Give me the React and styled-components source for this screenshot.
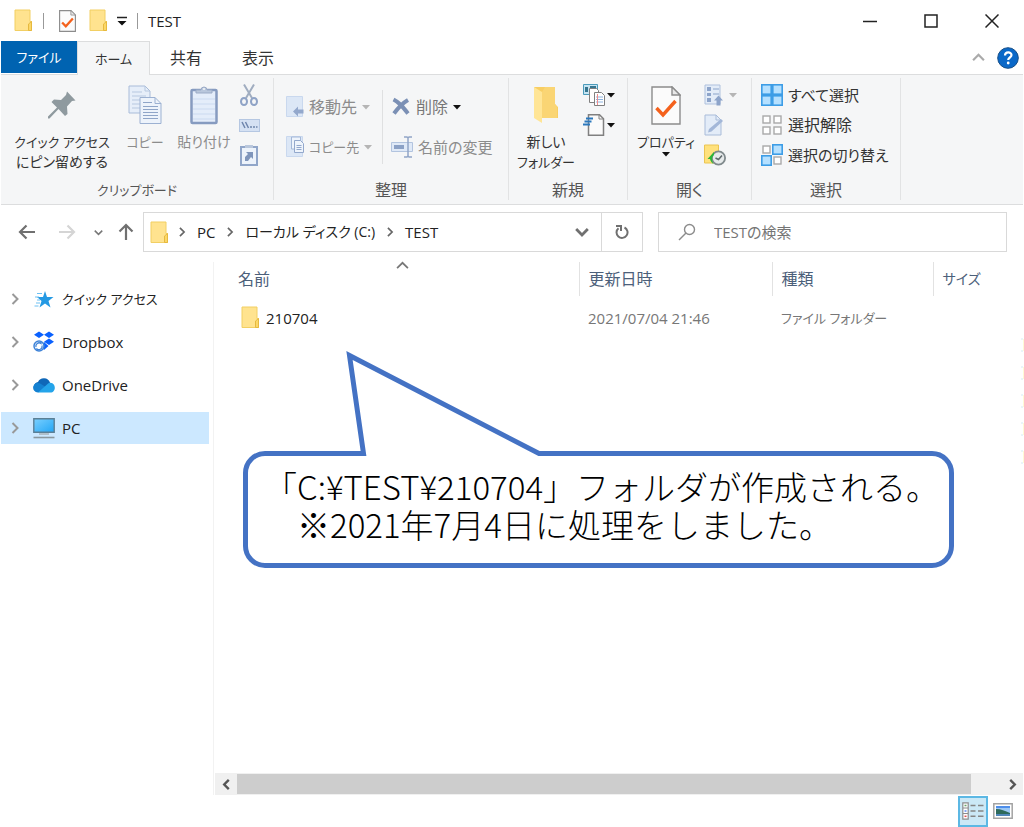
import React from 'react';
import styled, { createGlobalStyle } from 'styled-components';

const GlobalStyle = createGlobalStyle`
    * {
        box-sizing: border-box;
    }
    body {
        margin: 0;
        background-color: #fff;
        color: #333;
        font-family: "Open Sans", "Noto Sans CJK JP", sans-serif;
        font-size: 15px;
        line-height: 20px;
        font-feature-settings: "palt";
    }
    button, input {
        font: inherit;
        font-feature-settings: inherit;
        color: inherit;
        margin: 0;
        padding: 0;
        border: 0;
        background: none;
    }
    a {
        color: inherit;
        text-decoration: none;
    }
    svg {
        display: block;
        flex: none;
    }
`;

const sizes = { kana: '13px', label: '14px', mixed: '15px', kanji: '16px' };

const Window = styled.div`
    display: flex;
    flex-direction: column;
    min-height: 100vh;
    padding: 0 1px;
`;

const Text = styled.span`
    font-size: ${props => sizes[props.$size] || '15px'};
    white-space: nowrap;
`;

/* title bar */

const TitleBar = styled.header`
    display: flex;
    align-items: center;
    height: 41px;
    padding: 0 1px 0 8px;
    color: #222;
`;

const IconButton = styled.button`
    display: flex;
    align-items: center;
    justify-content: center;
    flex: none;
    width: ${props => props.$w || 30}px;
    height: ${props => props.$h || 30}px;
`;

const TitleDivider = styled.span`
    width: 1px;
    height: 16px;
    margin: 0 5px;
    background-color: #999;
`;

const WindowTitle = styled.h1`
    flex: 1;
    margin: 0 0 0 5px;
    font-size: 15px;
    font-weight: 400;
`;

/* tabs */

const TabBar = styled.nav`
    display: flex;
    height: 33px;
`;

const Tab = styled.button`
    width: ${props => props.$w || 72}px;
    font-size: ${props => sizes[props.$size] || '15px'};
    ${props => props.$file && `
        height: 32px;
        background-color: #0063b1;
        color: #fff;
    `}
    ${props => props.$active && `
        height: 34px;
        background-color: #f5f6f7;
        border: 1px solid #dcddde;
        border-bottom: 0;
        position: relative;
    `}
`;

const TabTools = styled.div`
    display: flex;
    align-items: center;
    margin-left: auto;
`;

/* ribbon */

const RibbonBar = styled.section`
    display: flex;
    height: 131px;
    padding: 3px 0 4px;
    background-color: #f5f6f7;
    border-top: 1px solid #dcddde;
    border-bottom: 1px solid #dcddde;
`;

const Group = styled.div`
    display: flex;
    flex-direction: column;
    flex: none;
    width: ${props => props.$w}px;
    border-right: 1px solid #e2e3e4;
`;

const GroupBody = styled.div`
    display: flex;
    flex: 1;
    padding-left: 7px;
`;

const GroupLabel = styled.div`
    text-align: center;
    color: #555;
    font-size: ${props => sizes[props.$size]};
`;

const BigButton = styled.button`
    display: flex;
    flex-direction: column;
    align-items: center;
    width: ${props => props.$w}px;
    font-size: ${props => sizes[props.$size] || '13px'};
    white-space: nowrap;
    &:disabled {
        color: #8c8c8c;
    }
`;

const BigIcon = styled.span`
    display: flex;
    align-items: center;
    height: 54px;
`;

const ButtonColumn = styled.div`
    display: flex;
    flex-direction: column;
    width: ${props => props.$w}px;
    padding-top: ${props => (props.$wide ? 9 : 2)}px;
    padding-left: ${props => props.$indent || 0}px;
`;

const SmallButton = styled.button`
    display: flex;
    align-items: center;
    gap: 5px;
    height: ${props => (props.$tall ? 40 : 30)}px;
    font-size: ${props => sizes[props.$size] || '15px'};
    white-space: nowrap;
    color: ${props => (props.$muted ? '#777' : 'inherit')};
    &:disabled {
        color: #8c8c8c;
    }
`;

const ColumnDivider = styled.span`
    width: 1px;
    height: 74px;
    margin: 12px 8px 0 0;
    background-color: #dfe0e1;
`;

/* address row */

const AddressRow = styled.div`
    display: flex;
    align-items: center;
    height: 57px;
    padding: 0 16px 3px 6px;
`;

const AddressBox = styled.div`
    display: flex;
    align-items: center;
    flex: 3 1 0;
    height: 40px;
    border: 1px solid #d9d9d9;
    padding-left: 6px;
    margin-right: 15px;
    color: #222;
`;

const Crumbs = styled.nav`
    display: flex;
    align-items: center;
    flex: 1;
    margin-left: 8px;
`;

const Crumb = styled.a`
    margin: 0 10px;
    white-space: nowrap;
    font-size: ${props => sizes[props.$size] || '15px'};
`;

const RefreshCell = styled.div`
    display: flex;
    align-items: center;
    align-self: stretch;
    border-left: 1px solid #d9d9d9;
`;

const SearchBox = styled.label`
    display: flex;
    align-items: center;
    flex: 2 1 0;
    height: 40px;
    padding-left: 19px;
    gap: 18px;
    border: 1px solid #d9d9d9;
`;

const SearchInput = styled.input`
    flex: 1;
    min-width: 0;
    outline: 0;
    &::placeholder {
        color: #757575;
        opacity: 1;
    }
`;

/* folder tree and file list */

const Content = styled.div`
    display: flex;
    flex: 1;
`;

const Sidebar = styled.nav`
    display: flex;
    flex-direction: column;
    gap: 11px;
    flex: none;
    width: 213px;
    padding: 21px 4px 0 0;
    border-right: 1px solid #f2f2f2;
`;

const TreeItem = styled.a`
    display: flex;
    align-items: center;
    height: 32px;
    padding-left: 8px;
    color: #222;
    background-color: ${props => (props.$selected ? '#cce8ff' : 'transparent')};
`;

const TreeIcon = styled.span`
    display: flex;
    justify-content: center;
    width: 24px;
    margin: 0 6px 0 11px;
`;

const Main = styled.main`
    position: relative;
    display: flex;
    flex-direction: column;
    flex: 1;
    min-width: 0;
`;

const FileTable = styled.table`
    width: 100%;
    table-layout: fixed;
    border-collapse: collapse;
    margin-bottom: auto;
`;

const HeadCell = styled.th`
    position: relative;
    width: ${props => (props.$w ? `${props.$w}px` : 'auto')};
    height: 34px;
    padding: 0 0 0 ${props => (props.$first ? 24 : 9)}px;
    border-right: ${props => (props.$last ? '0' : '1px solid #e2e2e2')};
    text-align: left;
    font-weight: 400;
    font-size: ${props => sizes[props.$size] || '16px'};
    color: #4c607a;
`;

const SortMark = styled.span`
    position: absolute;
    top: -3px;
    left: 50%;
`;

const Cell = styled.td`
    height: 43px;
    padding: 0 0 0 ${props => (props.$first ? 27 : 9)}px;
    font-size: ${props => sizes[props.$size] || '15px'};
    color: #777;
    white-space: nowrap;
`;

const FileName = styled.a`
    display: flex;
    align-items: center;
    gap: 6px;
    color: #222;
`;

const Callout = styled.aside`
    position: absolute;
    top: 189px;
    left: 29px;
    width: 711px;
    padding: 11px 16px 20px;
    border: 5px solid #4472c4;
    border-radius: 22px;
    background-color: #fff;
    color: #000;
    font-family: "Noto Sans CJK JP", sans-serif;
    font-feature-settings: normal;
    font-size: 33px;
    font-weight: 300;
    line-height: 38px;
    white-space: pre;
`;

const Tail = styled.svg`
    position: absolute;
    top: -105px;
    left: 96px;
`;

const EdgeMarks = styled.svg`
    position: absolute;
    top: 76px;
    right: -1px;
`;

const ScrollBar = styled.div`
    display: flex;
    align-items: center;
    height: 22px;
    margin-left: 1px;
    background-color: #f0f0f0;
`;

const ScrollTrack = styled.div`
    flex: 1;
    height: 20px;
    padding-right: 30px;
`;

const ScrollThumb = styled.div`
    height: 100%;
    background-color: #cdcdcd;
`;

const StatusBar = styled.footer`
    display: flex;
    align-items: center;
    justify-content: flex-end;
    height: 32px;
    padding-right: 5px;
`;

const ViewButton = styled(IconButton)`
    border: ${props => (props.$on ? '2px solid #5cb8e4' : '0')};
    background-color: ${props => (props.$on ? '#cbe8f6' : 'transparent')};
`;

/* icons */

const FolderIcon = () => (
    <svg width="19" height="23" viewBox="0 0 19 23">
        <path d="M1 1h15v11.5h1.5V21.5H1z" fill="#ffe38f" stroke="#f2cf63" />
        <path d="M14.5 21.5v-6.5l3-2.5v9z" fill="#fbd768" stroke="#e6b93f" />
    </svg>
);

const CheckPage = ({ w = 17, h = 22 }) => (
    <svg width={w} height={h} viewBox="0 0 30 39">
        <path d="M1 1h20l8 8v29H1z" fill="#fbfbfb" stroke="#8c8c8c" strokeWidth={w > 20 ? 1.4 : 2} />
        <path d="M21 1v8h8z" fill="#e8e8e8" stroke="#8c8c8c" strokeWidth="1.4" />
        <path d="M5.500 22l6.500 7L24.500 15" fill="none" stroke="#f4611c" strokeWidth={w > 20 ? 3.4 : 4} />
    </svg>
);

const Caret = ({ color = '#111' }) => (
    <svg width="8" height="5" viewBox="0 0 8 5">
        <path d="M0 0h8L4 4.500z" fill={color} />
    </svg>
);

const Chevron = ({ dir = 'right', w = 10, color = '#666', stroke = 2 }) => {
    const turn = { right: 0, down: 90, left: 180, up: 270 }[dir];
    return (
        <svg width={w} height={w} viewBox="0 0 12 12">
            <path d="M3.500 1l5 5-5 5" transform={`rotate(${turn} 6 6)`} fill="none" stroke={color} strokeWidth={stroke} />
        </svg>
    );
};

const Arrow = ({ turn = 0, color = '#707070' }) => (
    <svg width="18" height="18" viewBox="0 0 18 18">
        <path d="M17 9H2M8.500 2.500L2 9l6.500 6.500" transform={`rotate(${turn} 9 9)`} fill="none" stroke={color} strokeWidth="2.200" />
    </svg>
);

const QatMenuIcon = () => (
    <svg width="10" height="10" viewBox="0 0 10 10">
        <path d="M0 1.500h10" stroke="#222" strokeWidth="1.500" />
        <path d="M0.500 5h9L5 9.500z" fill="#111" />
    </svg>
);

const PinIcon = () => (
    <svg width="28" height="28" viewBox="0 0 28 28">
        <path d="M19 0.500l8.500 9-3.500 0.500-5 5.500 0.500 7.500-2.500 2-6.500-7L1.500 27.500 0 27.500v-2L9 16.500 3.500 11l2.500-2.500 7 0.500L18 4z" fill="#8f9a9f" />
    </svg>
);

const CopyIcon = () => (
    <svg width="34" height="40" viewBox="0 0 34 40">
        <path d="M1 1h16l5 5v22H1z" fill="#e6eef9" stroke="#a9bcd9" />
        <path d="M17 1v5h5M4 7h10M4 11h14M4 15h8M4 19h8M4 23h8" fill="none" stroke="#b7c8e0" />
        <path d="M12 12.500h15l6 6V38.500H12z" fill="#edf3fb" stroke="#9cb1d2" />
        <path d="M27 12.500v6h6" fill="none" stroke="#9cb1d2" />
        <path d="M15 17.500h9M15 21.500h15M15 24.500h15M15 27.500h15M15 30.500h15M15 33.500h15" stroke="#8fa5c8" />
    </svg>
);

const PasteIcon = () => (
    <svg width="28" height="40" viewBox="0 0 28 40">
        <rect x="1.500" y="5" width="25" height="33" rx="1" fill="#e4edfa" stroke="#869bc0" strokeWidth="2.500" />
        <path d="M3 14h22M3 19h22M3 24h22M3 29h22M3 34h22" stroke="#cbdaf0" />
        <path d="M6 8V5h5a3 3 0 0 1 6 0h5v3z" fill="#b9c7dc" stroke="#9babc6" />
        <circle cx="14" cy="4" r="1" fill="#f5f6f7" />
    </svg>
);

const CutIcon = () => (
    <svg width="18" height="22" viewBox="0 0 18 22" fill="none" stroke="#a0adc0">
        <path d="M4 0.500L12 14M14 0.500L6 14" strokeWidth="2" />
        <ellipse cx="4" cy="17.500" rx="3" ry="3.500" stroke="#8fa3c6" strokeWidth="2" />
        <ellipse cx="14" cy="17.500" rx="3" ry="3.500" stroke="#8fa3c6" strokeWidth="2" />
    </svg>
);

const CopyPathIcon = () => (
    <svg width="21" height="13" viewBox="0 0 21 13">
        <rect x="0.500" y="0.500" width="20" height="12" fill="#d5e1f3" stroke="#b5c7e2" />
        <path d="M3 3l3 6M6.500 3l3 6" stroke="#6f86ad" strokeWidth="1.500" />
        <path d="M11 8h2M14 8h2M17 8h1.500" stroke="#6f86ad" strokeWidth="1.500" />
    </svg>
);

const ShortcutIcon = () => (
    <svg width="18" height="22" viewBox="0 0 18 22">
        <rect x="1" y="3" width="16" height="18" fill="#edf3fb" stroke="#91a6c9" strokeWidth="2" />
        <path d="M5 1h8v3H5z" fill="#b9c7dc" />
        <path d="M5 17v-4l3-3-2-2h7v7l-2-2-3 4z" fill="#7f95bb" />
    </svg>
);

const MoveToIcon = () => (
    <svg width="18" height="22" viewBox="0 0 18 22">
        <path d="M0.500 0.500h16v20h-16z" fill="#dce7f6" stroke="#c9d8ee" />
        <path d="M7 15.500l5-5v3h5.500v4H12v3z" fill="#93a8cc" />
    </svg>
);

const CopyToIcon = () => (
    <svg width="18" height="22" viewBox="0 0 18 22">
        <path d="M0.500 0.500h16v20h-16z" fill="#dce7f6" stroke="#c9d8ee" />
        <path d="M5.500 1h9v12h-9z" fill="#eef4fc" stroke="#a4b8d8" />
        <path d="M8.500 4.500h6l3 3v9h-9z" fill="#eef4fc" stroke="#93a8cc" />
        <path d="M10.500 9.500h5M10.500 11.500h5M10.500 13.500h5" stroke="#93a8cc" />
    </svg>
);

const DeleteIcon = () => (
    <svg width="20" height="20" viewBox="0 0 20 20">
        <path d="M2.500 2.500c6 3 9 7 14.500 14M17 3C10 7 7 11 3 16.500" fill="none" stroke="#7b90b5" strokeWidth="4" />
    </svg>
);

const RenameIcon = () => (
    <svg width="22" height="22" viewBox="0 0 22 22">
        <path d="M0.500 6.500h21v9h-21z" fill="#dfe9f7" stroke="#b2c4df" />
        <path d="M3 9h10v4H3z" fill="#8ba1c6" />
        <path d="M13 1h3l1 1 1-1h3M13 21h3l1-1 1 1h3M17 2v18" fill="none" stroke="#91a5c7" strokeWidth="1.500" />
    </svg>
);

const NewFolderIcon = () => (
    <svg width="26" height="38" viewBox="0 0 26 38">
        <path d="M1 1h21v17l3 3v11H9z" fill="#f8ce63" />
        <path d="M1 1l8 5v31L1 32z" fill="#ffe596" />
        <path d="M9 6l3-5h10v17l2 3v11H9z" fill="#fad574" />
    </svg>
);

const NewItemIcon = () => (
    <svg width="22" height="22" viewBox="0 0 22 22">
        <path d="M0.500 0.500h14v10h-14z" fill="#c6e4f2" stroke="#4b9bbb" />
        <path d="M2 3h3v5H2zM7 2h6v3H7z" fill="#35758f" />
        <path d="M6.500 4.500h7l2 2v12h-9z" fill="#fff" stroke="#808080" />
        <path d="M11.500 8.500h7l3 3v10h-10z" fill="#fff" stroke="#808080" />
        <path d="M13 13h7M13 15.500h7M13 18h7" stroke="#8db4e0" />
        <path d="M14.500 10v11" stroke="#ef8d8d" />
    </svg>
);

const EasyAccessIcon = () => (
    <svg width="22" height="22" viewBox="0 0 22 22">
        <path d="M5.500 0.800h11l4 4v16.400h-15z" fill="#fafafa" stroke="#808080" strokeWidth="1.500" />
        <path d="M16 1v4h4" fill="none" stroke="#808080" />
        <path d="M3 4.500h7M1.500 7.500h7M0 10.500h7" stroke="#2b78bd" strokeWidth="2" />
    </svg>
);

const OpenIcon = () => (
    <svg width="20" height="22" viewBox="0 0 20 22">
        <path d="M1 1h15v19H1z" fill="#e3ecf8" stroke="#afc1dd" />
        <path d="M3 3h4v4H3zM3 9h4v3H3zM3 14h4v4H3z" fill="#8da4ca" />
        <path d="M9 5h6M9 10h6" stroke="#a9bcd9" strokeWidth="1.500" />
        <path d="M12.500 21.500v-5H10l4.500-5 4.500 5h-2.500v5z" fill="#8da4ca" />
    </svg>
);

const EditIcon = () => (
    <svg width="20" height="22" viewBox="0 0 20 22">
        <path d="M1 1h11l5 5v15H1z" fill="#e3ecf8" stroke="#a9bcd9" />
        <path d="M12 1v5h5" fill="none" stroke="#a9bcd9" />
        <path d="M4 18.500l1-3.500L17 5l2 2L7.500 17.500z" fill="#a3b7d8" />
    </svg>
);

const HistoryIcon = () => (
    <svg width="22" height="22" viewBox="0 0 22 22">
        <path d="M0.500 1h14v18h-14z" fill="#ffe17c" stroke="#ebc553" />
        <circle cx="14.500" cy="14" r="6.600" fill="#e6eaeb" stroke="#808a8d" strokeWidth="1.800" />
        <path d="M11.500 14l3 1.500 3.500-4" fill="none" stroke="#606a6d" strokeWidth="1.500" />
        <path d="M3.500 15l6.500-7v3c-2.500 2-2.500 5-0.500 9-1.500-1-3-2.500-3.500-5z" fill="#2db53a" />
    </svg>
);

const gridCells = [[0, 0], [11, 0], [0, 11], [11, 11]];

const SelectIcon = ({ on }) => (
    <svg width="22" height="22" viewBox="0 0 22 22">
        {gridCells.map(([x, y], i) => on.includes(i)
            ? <rect key={i} x={x + 0.8} y={y + 0.8} width="9.400" height="9.400" fill="#b5e0ff" stroke="#3d9de6" strokeWidth="1.600" />
            : <rect key={i} x={x + 2} y={y + 2} width="7" height="7" fill="#fff" stroke="#a9a9a9" strokeWidth="1.400" />)}
    </svg>
);

const MinimizeIcon = () => (
    <svg width="14" height="14" viewBox="0 0 14 14"><path d="M0 7.500h14" stroke="#222" strokeWidth="1.500" /></svg>
);

const MaximizeIcon = () => (
    <svg width="14" height="14" viewBox="0 0 14 14"><path d="M1 1h12v12H1z" fill="none" stroke="#222" strokeWidth="1.500" /></svg>
);

const CloseIcon = () => (
    <svg width="14" height="14" viewBox="0 0 14 14"><path d="M0.500 0.500l13 13M13.500 0.500l-13 13" stroke="#222" strokeWidth="1.500" /></svg>
);

const HelpIcon = () => (
    <svg width="22" height="22" viewBox="0 0 22 22">
        <circle cx="11" cy="11" r="10.300" fill="#0a68c8" stroke="#174f88" />
        <path d="M8 8.500c0-4 6.500-4 6.500-0.500 0 2.500-3.300 2.500-3.300 5" fill="none" stroke="#fff" strokeWidth="2.200" />
        <circle cx="11.200" cy="16" r="1.400" fill="#fff" />
    </svg>
);

const RefreshIcon = () => (
    <svg width="14" height="16" viewBox="0 0 14 16">
        <path d="M9.500 3.500A5.500 5.500 0 1 1 3.500 4.200" fill="none" stroke="#707070" strokeWidth="2" />
        <path d="M1 2h5v5" fill="none" stroke="#707070" strokeWidth="2" />
    </svg>
);

const SearchIcon = () => (
    <svg width="18" height="18" viewBox="0 0 18 18">
        <circle cx="11.500" cy="6.500" r="5" fill="none" stroke="#8c8c8c" strokeWidth="1.400" />
        <path d="M8 10L1 17" stroke="#8c8c8c" strokeWidth="1.400" />
    </svg>
);

const StarIcon = () => (
    <svg width="20" height="17" viewBox="0 0 20 17">
        <path d="M11 0l2 6h6.500l-5 4 2 6.500-5.500-4-5.500 4L7.500 10 3 6h6z" fill="#2499e3" />
        <path d="M3 2.500h5M1 6h4M3 9h3M2 12h4M0.500 15h4" stroke="#6cc0f2" />
    </svg>
);

const DropboxIcon = () => (
    <svg width="22" height="22" viewBox="0 0 22 22">
        <path d="M6 0.500l5 3.200L6 7 1 3.800zM16 0.500l5 3.200L16 7l-5-3.200zM16 7.500l5 3.200-5 3.300-5-3.200zM11 11l4.500 4-4.500 4-2-3z" fill="#0a61fe" />
        <circle cx="6" cy="15" r="5" fill="#fff" stroke="#3e83d8" strokeWidth="1.500" />
        <path d="M3 16a3.200 3.200 0 0 1 5-3.500V11M9 14.500a3.200 3.200 0 0 1-5 3.500v1.500" fill="none" stroke="#3e83d8" strokeWidth="1.300" />
    </svg>
);

const OneDriveIcon = () => (
    <svg width="22" height="15" viewBox="0 0 22 15">
        <path d="M3 13a5 5 0 0 1 2-9A6.500 6.500 0 0 1 17 4.500L14 12z" fill="#0f67b8" />
        <path d="M5 14.500A4.800 4.800 0 1 1 8 6l8 5z" fill="#1481d1" />
        <path d="M5 14.500L14 6.500a4 4 0 0 1 3.500-1.700c6 0.500 5.500 9.700 0 9.700z" fill="#24a4ea" />
    </svg>
);

const PcIcon = () => (
    <svg width="22" height="21" viewBox="0 0 22 21">
        <defs>
            <linearGradient id="screen" x1="0" y1="0" x2="1" y2="1">
                <stop offset="0" stopColor="#7ad0ff" />
                <stop offset="1" stopColor="#22a5f5" />
            </linearGradient>
        </defs>
        <path d="M0.800 0.800h20.400v13.400H0.800z" fill="url(#screen)" stroke="#5b7f95" strokeWidth="1.400" />
        <path d="M6 16h10" stroke="#a7b3ba" strokeWidth="1.500" />
        <path d="M0.500 19.500h21" stroke="#8a979e" strokeWidth="1.600" />
    </svg>
);

const DetailsIcon = () => (
    <svg width="22" height="18" viewBox="0 0 22 18">
        <path d="M0.800 0.800h5.400v16.400H0.800zM1 6h5M1 11.500h5" fill="#fff" stroke="#8c8c8c" strokeWidth="1.200" />
        <path d="M2.500 3.500h2" stroke="#6aa56a" strokeWidth="1.500" />
        <path d="M2.500 9h2" stroke="#5b8bf0" strokeWidth="1.500" />
        <path d="M2.500 14.300h2" stroke="#e05050" strokeWidth="1.500" />
        <path d="M8.500 3.500h5M16 3.500h5.500M8.500 9h5M16 9h5.500M8.500 14.300h5M16 14.300h5.500" stroke="#858585" strokeWidth="1.400" />
    </svg>
);

const ThumbnailIcon = () => (
    <svg width="20" height="16" viewBox="0 0 20 16">
        <path d="M0.800 0.800h18.400v14.400H0.800z" fill="#fff" stroke="#a3a3a3" strokeWidth="1.500" />
        <path d="M3 3h14v10H3z" fill="#9cc8f5" />
        <path d="M3 3h14v2H3z" fill="#4e8eea" />
        <path d="M3 6c5 0 9 2 14 4v1H3z" fill="#2d6a5b" />
        <path d="M3 11h14v2H3z" fill="#4f86b8" />
    </svg>
);

const treeItems = [
    { name: 'クイック アクセス', icon: <StarIcon />, size: 'kana' },
    { name: 'Dropbox', icon: <DropboxIcon /> },
    { name: 'OneDrive', icon: <OneDriveIcon /> },
    { name: 'PC', icon: <PcIcon />, selected: true },
];

const SplitWrap = styled(SmallButton)`
    padding-left: 7px;
    gap: ${props => (props.$wide ? 5 : 2)}px;
`;

function SplitButton({ label, wide, single, disabled, children }) {
    return (
        <SplitWrap aria-label={label} $wide={wide} disabled={disabled}>
            {children}
            {!single && <Caret color={disabled ? '#b5b5b5' : '#111'} />}
        </SplitWrap>
    );
}

function Ribbon() {
    return (
        <RibbonBar>
            <Group $w={273}>
                <GroupBody>
                    <BigButton $w={108}>
                        <BigIcon><PinIcon /></BigIcon>
                        <Text $size="kana">クイック アクセス</Text>
                        <Text $size="label">にピン留めする</Text>
                    </BigButton>
                    <BigButton $w={58} disabled>
                        <BigIcon><CopyIcon /></BigIcon>
                        コピー
                    </BigButton>
                    <BigButton $w={60} $size="label" disabled>
                        <BigIcon><PasteIcon /></BigIcon>
                        貼り付け
                    </BigButton>
                    <ButtonColumn $w={30}>
                        <IconButton aria-label="切り取り"><CutIcon /></IconButton>
                        <IconButton aria-label="パスのコピー"><CopyPathIcon /></IconButton>
                        <IconButton aria-label="ショートカットの貼り付け"><ShortcutIcon /></IconButton>
                    </ButtonColumn>
                </GroupBody>
                <GroupLabel $size="kana">クリップボード</GroupLabel>
            </Group>
            <Group $w={235}>
                <GroupBody>
                    <ButtonColumn $wide $indent={5} $w={101}>
                        <SmallButton $tall $size="kanji" disabled><MoveToIcon />移動先<Caret color="#b5b5b5" /></SmallButton>
                        <SmallButton $tall $size="kana" disabled><CopyToIcon />コピー先<Caret color="#b5b5b5" /></SmallButton>
                    </ButtonColumn>
                    <ColumnDivider />
                    <ButtonColumn $wide $w={110}>
                        <SmallButton $tall $size="kanji" $muted><DeleteIcon />削除<Caret /></SmallButton>
                        <SmallButton $tall $size="mixed" disabled><RenameIcon />名前の変更</SmallButton>
                    </ButtonColumn>
                </GroupBody>
                <GroupLabel $size="kanji">整理</GroupLabel>
            </Group>
            <Group $w={119}>
                <GroupBody>
                    <BigButton $w={60}>
                        <BigIcon><NewFolderIcon /></BigIcon>
                        <Text $size="label">新しい</Text>
                        <Text $size="kana">フォルダー</Text>
                    </BigButton>
                    <ButtonColumn $w={46}>
                        <SplitButton label="新しいアイテム"><NewItemIcon /></SplitButton>
                        <SplitButton label="ショートカット"><EasyAccessIcon /></SplitButton>
                    </ButtonColumn>
                </GroupBody>
                <GroupLabel $size="kanji">新規</GroupLabel>
            </Group>
            <Group $w={124}>
                <GroupBody>
                    <BigButton $w={62}>
                        <BigIcon><CheckPage w={30} h={39} /></BigIcon>
                        プロパティ
                        <Caret />
                    </BigButton>
                    <ButtonColumn $w={48}>
                        <SplitButton label="開く" wide disabled><OpenIcon /></SplitButton>
                        <SplitButton label="編集" single disabled><EditIcon /></SplitButton>
                        <SplitButton label="履歴" single><HistoryIcon /></SplitButton>
                    </ButtonColumn>
                </GroupBody>
                <GroupLabel $size="kanji">開く</GroupLabel>
            </Group>
            <Group $w={149}>
                <GroupBody>
                    <ButtonColumn $indent={2}>
                        <SmallButton $size="mixed"><SelectIcon on={[0, 1, 2, 3]} />すべて選択</SmallButton>
                        <SmallButton $size="kanji"><SelectIcon on={[]} />選択解除</SmallButton>
                        <SmallButton $size="mixed"><SelectIcon on={[1, 2]} />選択の切り替え</SmallButton>
                    </ButtonColumn>
                </GroupBody>
                <GroupLabel $size="kanji">選択</GroupLabel>
            </Group>
        </RibbonBar>
    );
}

function App() {
    return (
        <Window>
            <GlobalStyle />
            <TitleBar>
                <IconButton $w={29} aria-label="フォルダー"><FolderIcon /></IconButton>
                <TitleDivider />
                <IconButton $w={36} aria-label="プロパティ"><CheckPage /></IconButton>
                <IconButton $w={26} aria-label="新しいフォルダー"><FolderIcon /></IconButton>
                <IconButton $w={21} aria-label="カスタマイズ"><QatMenuIcon /></IconButton>
                <TitleDivider />
                <WindowTitle>TEST</WindowTitle>
                <IconButton $w={61} aria-label="最小化"><MinimizeIcon /></IconButton>
                <IconButton $w={61} aria-label="最大化"><MaximizeIcon /></IconButton>
                <IconButton $w={61} aria-label="閉じる"><CloseIcon /></IconButton>
            </TitleBar>
            <TabBar>
                <Tab $file $w={76} $size="kana">ファイル</Tab>
                <Tab $active $w={73} $size="kana">ホーム</Tab>
                <Tab $size="kanji">共有</Tab>
                <Tab $size="kanji">表示</Tab>
                <TabTools>
                    <IconButton aria-label="リボンの最小化"><Chevron dir="up" w={13} color="#aaa" /></IconButton>
                    <IconButton aria-label="ヘルプ"><HelpIcon /></IconButton>
                </TabTools>
            </TabBar>
            <Ribbon />
            <AddressRow>
                <IconButton $w={40} aria-label="戻る"><Arrow /></IconButton>
                <IconButton $w={40} aria-label="進む"><Arrow turn={180} color="#d5d5d5" /></IconButton>
                <IconButton $w={22} aria-label="最近表示した場所"><Chevron dir="down" w={9} color="#777" /></IconButton>
                <IconButton $w={34} aria-label="上へ"><Arrow turn={90} /></IconButton>
                <AddressBox>
                    <FolderIcon />
                    <Crumbs>
                        <Chevron />
                        <Crumb href="#pc">PC</Crumb>
                        <Chevron />
                        <Crumb href="#c" $size="label">ローカル ディスク (C:)</Crumb>
                        <Chevron />
                        <Crumb href="#test">TEST</Crumb>
                    </Crumbs>
                    <IconButton $w={38} aria-label="履歴を表示"><Chevron dir="down" w={14} color="#707070" stroke={2.4} /></IconButton>
                    <RefreshCell>
                        <IconButton $w={40} aria-label="更新"><RefreshIcon /></IconButton>
                    </RefreshCell>
                </AddressBox>
                <SearchBox>
                    <SearchIcon />
                    <SearchInput type="text" placeholder="TESTの検索" aria-label="TESTの検索" />
                </SearchBox>
            </AddressRow>
            <Content>
                <Sidebar>
                    {treeItems.map(item => (
                        <TreeItem key={item.name} href="#tree" $selected={item.selected}>
                            <Chevron w={12} color="#999" />
                            <TreeIcon>{item.icon}</TreeIcon>
                            <Text $size={item.size}>{item.name}</Text>
                        </TreeItem>
                    ))}
                </Sidebar>
                <Main>
                    <FileTable>
                        <thead>
                            <tr>
                                <HeadCell $first>
                                    名前
                                    <SortMark><Chevron dir="up" w={13} color="#777" stroke={1.6} /></SortMark>
                                </HeadCell>
                                <HeadCell $w={193}>更新日時</HeadCell>
                                <HeadCell $w={161}>種類</HeadCell>
                                <HeadCell $w={90} $last $size="label">サイズ</HeadCell>
                            </tr>
                        </thead>
                        <tbody>
                            <tr>
                                <Cell $first><FileName href="#210704"><FolderIcon />210704</FileName></Cell>
                                <Cell>2021/07/04 21:46</Cell>
                                <Cell $size="kana">ファイル フォルダー</Cell>
                                <Cell />
                            </tr>
                        </tbody>
                    </FileTable>
                    <EdgeMarks width="3" height="128" viewBox="0 0 3 128">
                        {[0, 28, 56, 84, 112].map(y => (
                            <g key={y}>
                                <path d={`M2.500 ${y + 1}v12`} stroke="#fffbd6" />
                                <path d={`M0 ${y + 1}h2M0 ${y + 13}h2`} stroke="#d5ecf5" />
                            </g>
                        ))}
                    </EdgeMarks>
                    <Callout>
                        <Tail width="210" height="106" viewBox="0 0 210 106">
                            <path d="M20 106V102L5 7L196 102V106z" fill="#fff" />
                            <path d="M-1 102.500H19.500L5.500 4.500L195 102.500H211" fill="none" stroke="#4472c4" strokeWidth="5" />
                        </Tail>
                        {'「C:¥TEST¥210704」フォルダが作成される。\n\u3000※2021年7月4日に処理をしました。'}
                    </Callout>
                    <ScrollBar>
                        <IconButton $w={22} $h={20} aria-label="左へスクロール"><Chevron dir="left" w={11} color="#555" stroke={2.6} /></IconButton>
                        <ScrollTrack><ScrollThumb /></ScrollTrack>
                        <IconButton $w={22} $h={20} aria-label="右へスクロール"><Chevron w={11} color="#555" stroke={2.6} /></IconButton>
                    </ScrollBar>
                </Main>
            </Content>
            <StatusBar>
                <ViewButton $on $w={30} $h={31} aria-label="詳細"><DetailsIcon /></ViewButton>
                <ViewButton $w={30} $h={31} aria-label="大きい縮小版"><ThumbnailIcon /></ViewButton>
            </StatusBar>
        </Window>
    );
}

export default App;
